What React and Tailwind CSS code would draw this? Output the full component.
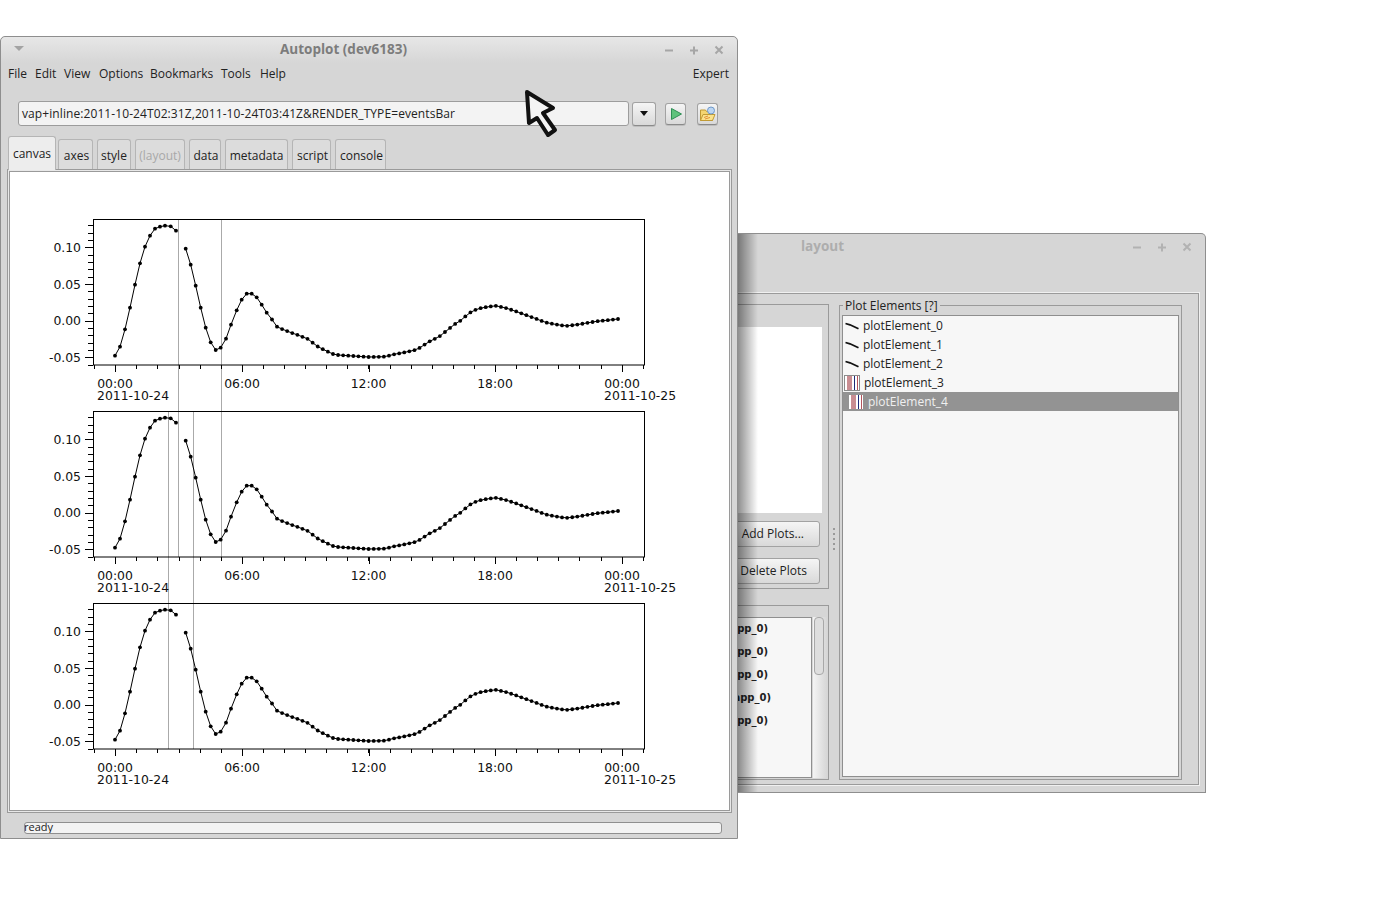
const leftPart = [
  [115, 355.7], [120, 346.7], [125, 329.3], [130, 307.7], [135, 284.7], [140, 263.3], [145, 246.7],
  [150, 235.7], [155, 228.7], [160, 226.7], [165, 225.7], [170.7, 226.3], [176, 230.7],
];

const middlePart = [
  [185.7, 248.7], [190.7, 264.7], [195.7, 285.7], [200.7, 307.7], [205.7, 327.7], [210.7, 342.3],
  [215.7, 350], [220.7, 347.7], [226, 338.7], [231, 324.7], [236.7, 310.3], [241.7, 299.7],
  [246.7, 293.7], [251.7, 293.7], [256.7, 297.3], [261.7, 304.7], [266.7, 312.7], [272, 319.5],
];

const knots = [
  [272, 319.5], [277, 326.7], [282, 329], [287, 331], [292, 333], [297, 334.7], [303, 337], [308, 339],
  [313, 343], [318, 346.7], [323, 349.3], [328, 351.7], [333, 354], [338, 355], [353, 356], [369, 357],
  [385, 356.7], [394, 354.3], [403, 352.7], [414, 350.3], [419, 348.3], [424, 345], [429, 341.7],
  [435, 338.7], [440, 336], [445, 332], [450, 328], [455, 324], [460, 321], [465, 316.7], [470, 312.7],
  [475, 310], [480, 308.3], [485, 307.3], [495, 305.7], [505, 307.7], [515, 311], [525, 314.7],
  [535, 318.3], [545, 322.3], [555, 324.3], [566, 326], [576.7, 324.7], [586.7, 323], [596.7, 321.3],
  [606.7, 320.3], [618, 319],
];

function interp(x) {
  for (let i = 1; i < knots.length; i++) {
    if (x <= knots[i][0]) {
      const [x0, y0] = knots[i - 1];
      const [x1, y1] = knots[i];
      return y0 + ((x - x0) / (x1 - x0)) * (y1 - y0);
    }
  }
  return knots[knots.length - 1][1];
}

const rightPart = [];
for (let i = 0; i <= 67; i++) {
  const x = 277 + i * 5.09;
  rightPart.push([x, interp(x)]);
}

const secondPart = [...middlePart, ...rightPart];
const toPath = (pts) => pts.map((p) => p.join(",")).join(" ");

const yMajor = [
  ["0.10", 247.2],
  ["0.05", 284],
  ["0.00", 320.6],
  ["-0.05", 357.3],
];

const xMajor = [
  ["00:00", 115],
  ["06:00", 242],
  ["12:00", 368.5],
  ["18:00", 495],
  ["00:00", 622],
];

function Panel({ dy }) {
  const yMinor = [];
  for (let i = -6; i <= 13; i++) yMinor.push(320.6 - i * 7.33);
  const xMinor = [];
  for (let i = -1; i <= 25; i++) xMinor.push(115.2 + i * 21.1);

  return (
    <g transform={`translate(0 ${dy})`}>
      <rect x="93.5" y="219.5" width="551" height="145.5" fill="none" stroke="#000" />
      {yMinor.map((y) => (
        <line key={y} x1="88" x2="93" y1={Math.round(y) + 0.5} y2={Math.round(y) + 0.5} stroke="#000" />
      ))}
      {yMajor.map(([label, y]) => (
        <g key={label}>
          <line x1="85" x2="93" y1={Math.round(y) + 0.5} y2={Math.round(y) + 0.5} stroke="#000" />
          <text x="81" y={y + 4.6} textAnchor="end" fontSize="12.4" fill="#111">
            {label}
          </text>
        </g>
      ))}
      {xMinor.map((x) => (
        <line key={x} x1={Math.round(x) + 0.5} x2={Math.round(x) + 0.5} y1="365" y2="369" stroke="#000" />
      ))}
      {xMajor.map(([label, x], i) => (
        <g key={i}>
          <line x1={Math.round(x) + 0.5} x2={Math.round(x) + 0.5} y1="365" y2="372" stroke="#000" />
          <text x={x} y="388" textAnchor="middle" fontSize="12.4" fill="#111">
            {label}
          </text>
        </g>
      ))}
      <text x="97" y="400" fontSize="12.4" fill="#111">2011-10-24</text>
      <text x="604" y="400" fontSize="12.4" fill="#111">2011-10-25</text>
      <polyline points={toPath(leftPart)} fill="none" stroke="#000" strokeWidth="1" />
      <polyline points={toPath(secondPart)} fill="none" stroke="#000" strokeWidth="1" />
      {[...leftPart, ...secondPart].map(([x, y], i) => (
        <circle key={i} cx={x} cy={y} r="1.9" fill="#000" />
      ))}
    </g>
  );
}

function Chart() {
  return (
    <svg viewBox="10 172 719 638" className="block w-[719px] h-[638px] font-['DejaVu_Sans']">
      <g stroke="#aaaaaa" strokeWidth="1">
        <line x1="178.5" x2="178.5" y1="220" y2="557" />
        <line x1="221.5" x2="221.5" y1="220" y2="557" />
        <line x1="168.5" x2="168.5" y1="412" y2="749" />
        <line x1="193.5" x2="193.5" y1="412" y2="749" />
      </g>
      <Panel dy={0} />
      <Panel dy={192} />
      <Panel dy={384} />
    </svg>
  );
}

function WindowButtons({ color }) {
  return (
    <svg width="62" height="12" viewBox="0 0 62 12" fill="none" stroke={color} strokeWidth="2">
      <path d="M0 6.5h8" />
      <path d="M25 6.5h8M29 2.5v8" />
      <path d="M50.5 2.5l7 7M57.5 2.5l-7 7" />
    </svg>
  );
}

function ToolButton({ className, children }) {
  return (
    <button className={`flex items-center justify-center rounded-[3px] border border-[#a2a2a2] border-b-[#8a8a8a] bg-linear-to-b from-[#f5f5f5] to-[#d9d9d9] shadow-[0_1px_0_#bdbdbd] ${className}`}>
      {children}
    </button>
  );
}

const tabs = [
  { label: "axes", w: "w-[35px] pl-[2px]" },
  { label: "style", w: "w-[34px]" },
  { label: "(layout)", w: "w-[50px]", muted: true },
  { label: "data", w: "w-[32px] pl-[2px]" },
  { label: "metadata", w: "w-[63px]" },
  { label: "script", w: "w-[39px] pl-[2px]" },
  { label: "console", w: "w-[51px] pl-[2px]" },
];

const menus = [
  { label: "File", w: "w-[27px]" },
  { label: "Edit", w: "w-[29px]" },
  { label: "View", w: "w-[35px]" },
  { label: "Options", w: "w-[51px]" },
  { label: "Bookmarks", w: "w-[71px]" },
  { label: "Tools", w: "w-[39px]" },
  { label: "Help", w: "w-[30px]" },
];

function MainWindow() {
  return (
    <div className="absolute left-0 top-[36px] z-10 flex h-[803px] w-[738px] flex-col rounded-t-[5px] border border-[#8e8e8e] bg-[#d6d6d6] text-[#222]">
      <div className="relative flex h-[26px] shrink-0 items-center justify-center rounded-t-[5px] bg-linear-to-b from-[#e7e7e7] to-[#d6d6d6]">
        <span className="absolute left-[13px] top-[9px] h-0 w-0 border-x-[5px] border-t-[5px] border-x-transparent border-t-[#a3a3a3]" />
        <span className="mb-[2px] mr-[51px] text-[13.5px] font-bold text-[#7c7c7c]">Autoplot (dev6183)</span>
        <div className="absolute right-[10px] top-[7px] flex">
          <WindowButtons color="#a6a6a6" />
        </div>
      </div>

      <div className="flex h-[22px] shrink-0 items-center justify-between pl-[7px] pr-[8px] text-[12px]">
        <div className="flex">
          {menus.map((m) => (
            <span key={m.label} className={m.w}>{m.label}</span>
          ))}
        </div>
        <span>Expert</span>
      </div>

      <div className="mt-[16px] flex h-[25px] shrink-0 items-center pl-[17px]">
        <div className="flex h-[25px] w-[611px] items-center rounded-[3px] border border-[#9c9c9c] bg-[#f3f3f3] pl-[3px] text-[12px] tracking-[0.087px]">
          vap+inline:2011-10-24T02:31Z,2011-10-24T03:41Z&RENDER_TYPE=eventsBar
        </div>
        <ToolButton className="ml-[3px] h-[24px] w-[24px]">
          <span className="h-0 w-0 border-x-[4.5px] border-t-[5px] border-x-transparent border-t-[#111]" />
        </ToolButton>
        <ToolButton className="ml-[9px] h-[22px] w-[21px]">
          <svg width="14" height="14" viewBox="0 0 14 14">
            <path d="M2.5 1.5v11l10-5.5z" fill="#5fc27c" stroke="#2f8f55" />
          </svg>
        </ToolButton>
        <ToolButton className="ml-[11px] h-[22px] w-[21px]">
          <svg width="18" height="18" viewBox="0 0 18 18">
            <path d="M1.5 5h5l1 1.5h6v9h-12z" fill="#f4d571" stroke="#c09a35" />
            <path d="M1.5 15.5l2.5-6h12l-2.5 6z" fill="#fbe38d" stroke="#c09a35" />
            <path d="M5 12.5l4-1.5M6 14l5-1.5" stroke="#e0913a" strokeWidth="1" />
            <circle cx="12" cy="5.5" r="3.5" fill="#bcd6f2" stroke="#6e98c8" />
          </svg>
        </ToolButton>
      </div>

      <div className="mt-[11px] flex h-[33px] shrink-0 items-end gap-[4px] pl-[7px] text-[12px]">
        <button className="relative z-10 -mr-[2px] h-[34px] w-[48px] rounded-t-[3px] border border-b-0 border-[#b5b5b5] bg-[#ededed]">
          canvas
        </button>
        {tabs.map((t) => (
          <button
            key={t.label}
            className={`h-[31px] rounded-t-[3px] border border-b-0 border-[#b5b5b5] bg-[#dcdcdc] pt-[1px] ${t.w} ${t.muted ? "text-[#a8a8a8]" : ""}`}
          >
            {t.label}
          </button>
        ))}
      </div>

      <div className="-mt-px ml-[6px] h-[644px] w-[725px] shrink-0 border border-[#9a9a9a] bg-[#e8e8e8] p-px">
        <div className="border border-[#9a9a9a] bg-white">
          <Chart />
        </div>
      </div>

      <div className="ml-[23px] mt-[9px] flex h-[12px] w-[698px] shrink-0 items-center overflow-hidden rounded-[3px] border border-[#8f8f8f] bg-[#f3f3f3] text-[11px] leading-none">
        <span className="-ml-px -translate-y-[2px]">ready</span>
      </div>
    </div>
  );
}

function LineIcon() {
  return (
    <svg width="14" height="8" viewBox="0 0 14 8" className="shrink-0">
      <path d="M0.5 1.5L5 2.8l8.5 4" stroke="#111" strokeWidth="1.8" fill="none" />
    </svg>
  );
}

function BarsIcon({ boxed }) {
  return (
    <svg width="16" height="16" viewBox="0 0 16 16" className="shrink-0">
      <rect x="0.5" y="0.5" width="15" height="15" fill="#fff" stroke={boxed ? "#8c8c8c" : "#939393"} />
      <rect x="3" y="1" width="5" height="14" fill="#c98d92" />
      <rect x="10" y="1" width="1" height="14" fill="#1c2a78" />
      <rect x="13" y="1" width="1" height="14" fill="#b3545c" />
    </svg>
  );
}

const elements = ["plotElement_0", "plotElement_1", "plotElement_2"];
const bindings = [
  { label: "pp_0)", pr: "pr-[43px]" },
  { label: "pp_0)", pr: "pr-[43px]" },
  { label: "pp_0)", pr: "pr-[43px]" },
  { label: "app_0)", pr: "pr-[40px]" },
  { label: "pp_0)", pr: "pr-[43px]" },
];

function LayoutWindow() {
  return (
    <div className="absolute left-[738px] top-[233px] flex h-[560px] w-[468px] flex-col overflow-hidden rounded-tr-[5px] border border-l-0 border-[#8e8e8e] bg-[#d6d6d6] text-[#222]">
      <div className="relative flex h-[25px] shrink-0 items-center pl-[63px]">
        <span className="text-[13.5px] font-bold text-[#adadad]">layout</span>
        <div className="absolute right-[10px] top-[7px] flex">
          <WindowButtons color="#b2b2b2" />
        </div>
      </div>

      <div className="mt-[34px] h-[492px] w-[461px] shrink-0 border border-l-0 border-[#9a9a9a] shadow-[0_0_0_1px_#f0f0f0]">
        <div className="flex h-full gap-[10px] pt-[10px]">
          <div className="flex w-[91px] shrink-0 flex-col gap-[16px]">
            <div className="flex h-[285px] flex-col items-end border border-l-0 border-[#9a9a9a]">
              <div className="mr-[6px] mt-[22px] h-[186px] w-[84px] bg-white" />
              <button className="mr-[8px] mt-[8px] flex h-[26px] w-[110px] shrink-0 items-center justify-end rounded-[3px] border border-[#a2a2a2] bg-linear-to-b from-[#f5f5f5] to-[#d9d9d9] pr-[15px] text-[12px]">
                Add Plots...
              </button>
              <button className="mr-[8px] mt-[11px] flex h-[26px] w-[110px] shrink-0 items-center justify-end rounded-[3px] border border-[#a2a2a2] bg-linear-to-b from-[#f5f5f5] to-[#d9d9d9] pr-[12px] text-[12px]">
                Delete Plots
              </button>
            </div>
            <div className="flex h-[175px] border border-l-0 border-[#9a9a9a] pt-[11px]">
              <div className="h-[161px] w-[74px] shrink-0 overflow-hidden border border-l-0 border-[#8f8f8f] bg-[#f7f7f7]">
                <div className="-mt-px">
                  {bindings.map((b, i) => (
                    <div key={i} className={`flex h-[23px] items-center justify-end overflow-hidden whitespace-nowrap font-['DejaVu_Sans'] text-[10px] font-bold ${b.pr}`}>
                      {b.label}
                    </div>
                  ))}
                </div>
              </div>
              <div className="ml-[1px] h-[161px] w-[14px] shrink-0 bg-linear-to-r from-[#f4f4f4] to-[#d6d6d6] pl-[1px]">
                <div className="h-[58px] w-[10px] rounded-[4px] border border-[#a8a8a8] bg-[#dedede]" />
              </div>
            </div>
          </div>

          <fieldset className="relative -mt-[7px] h-[483px] w-[343px] shrink-0 border border-[#9a9a9a] px-[2px] pb-[2px]">
            <legend className="relative top-px ml-[1px] px-[2px] text-[12px] leading-[16px]">Plot Elements [?]</legend>
            <div className="absolute -left-[7px] top-[215px] flex flex-col gap-[3px]">
              {[0, 1, 2, 3, 4].map((n) => (
                <span key={n} className="h-[2px] w-[2px] bg-[#9a9a9a]" />
              ))}
            </div>
            <div className="mt-[2px] h-[462px] border border-[#8f8f8f] bg-[#f7f7f7] text-[12px]">
              {elements.map((e) => (
                <div key={e} className="flex h-[19px] items-center gap-[4px] pl-[2px]">
                  <LineIcon />
                  <span>{e}</span>
                </div>
              ))}
              <div className="flex h-[19px] items-center gap-[4px] pl-[1px]">
                <BarsIcon boxed />
                <span>plotElement_3</span>
              </div>
              <div className="flex h-[19px] items-center gap-[4px] bg-[#939393] pl-[5px] text-[#f0f0f0]">
                <BarsIcon />
                <span>plotElement_4</span>
              </div>
            </div>
          </fieldset>
        </div>
      </div>

      {/* shadow thrown by the main window */}
      <div className="absolute inset-y-0 left-0 w-[20px] bg-linear-to-r from-[#00000070] to-transparent" />
    </div>
  );
}

function Cursor() {
  return (
    <svg width="40" height="54" viewBox="520 87 40 54" className="absolute left-[520px] top-[87px] z-20">
      <path
        d="M527 92l26 16-10 5 12 17-7 5-11-17-8 5z"
        fill="#f4f4f4"
        stroke="#111"
        strokeWidth="4"
        strokeLinejoin="round"
      />
    </svg>
  );
}

export default function App() {
  return (
    <div className="relative h-[923px] w-[1378px] overflow-hidden bg-white font-['Open_Sans',sans-serif]">
      <LayoutWindow />
      <MainWindow />
      <Cursor />
    </div>
  );
}
